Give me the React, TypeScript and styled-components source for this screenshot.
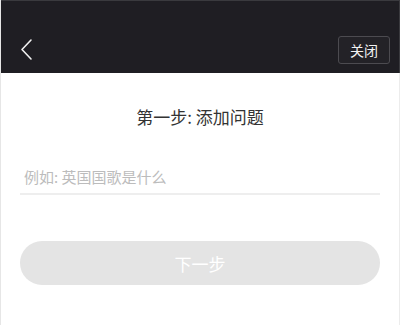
import styled, { createGlobalStyle } from 'styled-components';

const GlobalStyle = createGlobalStyle`
  body {
    margin: 0;
    background: #ffffff;
    font-family: "Noto Sans CJK SC", "Noto Sans", sans-serif;
  }
`;

const Page = styled.div`
  width: 400px;
  height: 325px;
  box-sizing: border-box;
  border-left: 1px solid #e6e6e6;
  display: flex;
  flex-direction: column;
  overflow: hidden;
`;

const Header = styled.div`
  height: 73px;
  box-sizing: border-box;
  background: #1f1e23;
  border-top: 1px solid #3a3a3e;
  border-right: 1px solid #3a3a3e;
  display: flex;
  align-items: flex-end;
  justify-content: space-between;
  padding: 0 9px 9px 18px;
`;

const BackButton = styled.button`
  width: 16px;
  height: 28px;
  padding: 0;
  border: none;
  background: transparent;
  display: flex;
  align-items: center;
  justify-content: center;
  cursor: pointer;
`;

const CloseButton = styled.button`
  width: 52px;
  height: 28px;
  box-sizing: border-box;
  border: 1px solid #4c4b50;
  border-radius: 3px;
  background: #232227;
  color: #f2f2f2;
  font-family: inherit;
  font-size: 14px;
  padding: 0;
  cursor: pointer;
`;

const Body = styled.div`
  flex: 1;
  border-right: 1px solid #ececec;
  padding: 32px 19px 0 19px;
  display: flex;
  flex-direction: column;
`;

const Title = styled.h1`
  margin: 0;
  height: 24px;
  line-height: 24px;
  text-align: center;
  font-size: 17px;
  font-weight: 400;
  color: #333333;
`;

const Field = styled.input`
  margin-top: 31px;
  height: 33px;
  box-sizing: content-box;
  border: none;
  border-bottom: 2px solid #eeeeee;
  outline: none;
  padding: 0 0 0 4px;
  font-family: inherit;
  font-size: 15px;
  color: #333;
  background: transparent;

  &::placeholder {
    color: #bcbcbc;
  }
`;

const NextButton = styled.button`
  margin-top: 46px;
  height: 44px;
  border: none;
  border-radius: 22px;
  background: #e4e4e4;
  color: #ffffff;
  font-family: inherit;
  font-size: 17px;
  cursor: default;
`;

const App = () => {
  return (
    <>
      <GlobalStyle />
      <Page>
        <Header>
          <BackButton aria-label="返回">
            <svg width="14" height="24" viewBox="0 0 14 24">
              <polyline
                points="11,2 2,11.5 11,21"
                fill="none"
                stroke="#f0f0f0"
                strokeWidth="1.6"
                strokeLinecap="round"
                strokeLinejoin="round"
              />
            </svg>
          </BackButton>
          <CloseButton>关闭</CloseButton>
        </Header>
        <Body>
          <Title>第一步: 添加问题</Title>
          <Field placeholder="例如: 英国国歌是什么" />
          <NextButton disabled>下一步</NextButton>
        </Body>
      </Page>
    </>
  );
};

export default App;
